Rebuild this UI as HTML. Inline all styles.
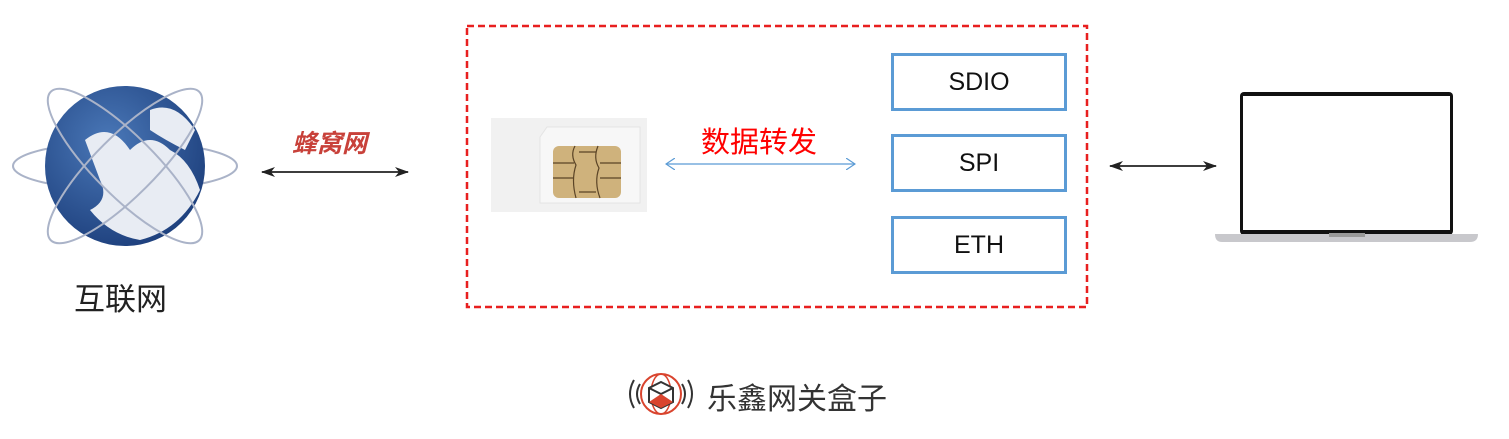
<!DOCTYPE html>
<html><head><meta charset="utf-8"><style>
body{margin:0;width:1509px;height:439px;background:#fff;position:relative;overflow:hidden;font-family:"Liberation Sans","Noto Sans CJK SC",sans-serif}
.a{position:absolute}
.box{position:absolute;left:891px;width:170px;height:52px;border:3.5px solid #5b9bd5;font-size:25px;color:#111;line-height:52px;text-align:center}
</style></head><body>
<svg class="a" style="left:0;top:0" width="1509" height="439">
<defs>
<radialGradient id="g" cx="0.4" cy="0.35" r="0.7"><stop offset="0" stop-color="#4a78b8"/><stop offset="1" stop-color="#1d3f7c"/></radialGradient>
<marker id="ak" markerWidth="14" markerHeight="10" refX="13" refY="5" orient="auto-start-reverse" markerUnits="userSpaceOnUse"><path d="M0,0 L14,5 L0,10 L4,5Z" fill="#222"/></marker>
<marker id="ab" markerWidth="10" markerHeight="12" refX="9" refY="6" orient="auto-start-reverse" markerUnits="userSpaceOnUse"><path d="M0,0 L9,6 L0,12" fill="none" stroke="#5b9bd5" stroke-width="1.2"/></marker>
</defs>
<ellipse cx="125" cy="166" rx="112" ry="24" fill="none" stroke="#aab3c8" stroke-width="2"/>
<circle cx="125" cy="166" r="80" fill="url(#g)"/>
<path d="M85,140 Q110,120 130,150 Q150,130 170,150 Q190,160 200,190 Q180,230 140,240 Q110,235 90,210 Q110,200 100,180 Z" fill="#e8ecf3"/>
<path d="M150,110 Q175,100 195,130 L185,150 Q165,140 150,130Z" fill="#e8ecf3"/>
<ellipse cx="125" cy="166" rx="30" ry="105" transform="rotate(-45 125 166)" fill="none" stroke="#aab3c8" stroke-width="2"/>
<ellipse cx="125" cy="166" rx="30" ry="105" transform="rotate(45 125 166)" fill="none" stroke="#aab3c8" stroke-width="2"/>
<line x1="262" y1="172" x2="408" y2="172" stroke="#222" stroke-width="1.8" marker-start="url(#ak)" marker-end="url(#ak)"/>
<rect x="467" y="26" width="620" height="281" fill="none" stroke="#e81f1f" stroke-width="2.5" stroke-dasharray="7,4"/>
<rect x="491" y="118" width="156" height="94" fill="#f1f1f1"/>
<path d="M547,127 L640,127 L640,203 L540,203 L540,137Z" fill="#f7f7f7" stroke="#e4e4e4"/>
<rect x="553" y="146" width="68" height="52" rx="6" fill="#cfb27c"/>
<path d="M575,146 Q570,155 576,165 Q571,180 576,198 M598,146 Q593,158 599,168 Q594,182 600,198 M553,163 H574 M553,178 H574 M600,163 H621 M600,178 H621 M579,152 H596 M579,192 H596" fill="none" stroke="#5b4426" stroke-width="1.2"/>
<line x1="666" y1="164" x2="855" y2="164" stroke="#5b9bd5" stroke-width="1.3" marker-start="url(#ab)" marker-end="url(#ab)"/>
<line x1="1110" y1="166" x2="1216" y2="166" stroke="#222" stroke-width="1.8" marker-start="url(#ak)" marker-end="url(#ak)"/>
<rect x="1240" y="92" width="213" height="143" rx="4" fill="#111"/>
<rect x="1243" y="96" width="207" height="134" fill="#fff"/>
<path d="M1215,234 H1478 Q1478,242 1470,242 H1222 Q1215,242 1215,234Z" fill="#c8c8cc"/>
<rect x="1329" y="233" width="36" height="4" fill="#999"/>
<circle cx="661" cy="394" r="20" fill="none" stroke="#d9442e" stroke-width="2"/>
<ellipse cx="661" cy="394" rx="10" ry="20" fill="none" stroke="#d9442e" stroke-width="1.5"/>
<path d="M661,382 L673,388 L673,402 L661,408 L649,402 L649,388Z M649,388 L661,394 L673,388 M661,394 V408" fill="#fff" stroke="#333" stroke-width="2"/>
<path d="M649,402 L661,394 L673,402 L661,408Z" fill="#d9442e"/>
<path d="M640,384 Q634,394 640,404 M634,380 Q626,394 634,408 M682,384 Q688,394 682,404 M688,380 Q696,394 688,408" fill="none" stroke="#333" stroke-width="2"/>
</svg>
<div class="a" style="left:74px;top:274px;font-size:31px;color:#222">互联网</div>
<div class="a" style="left:292px;top:124px;font-size:25px;color:#c8413a;font-style:italic;font-weight:bold">蜂窝网</div>
<div class="a" style="left:701px;top:119px;font-size:29px;color:#ff0000">数据转发</div>
<div class="box" style="top:53px">SDIO</div>
<div class="box" style="top:134px">SPI</div>
<div class="box" style="top:216px">ETH</div>
<div class="a" style="left:707px;top:374px;font-size:30px;color:#333">乐鑫网关盒子</div>
</body></html>
